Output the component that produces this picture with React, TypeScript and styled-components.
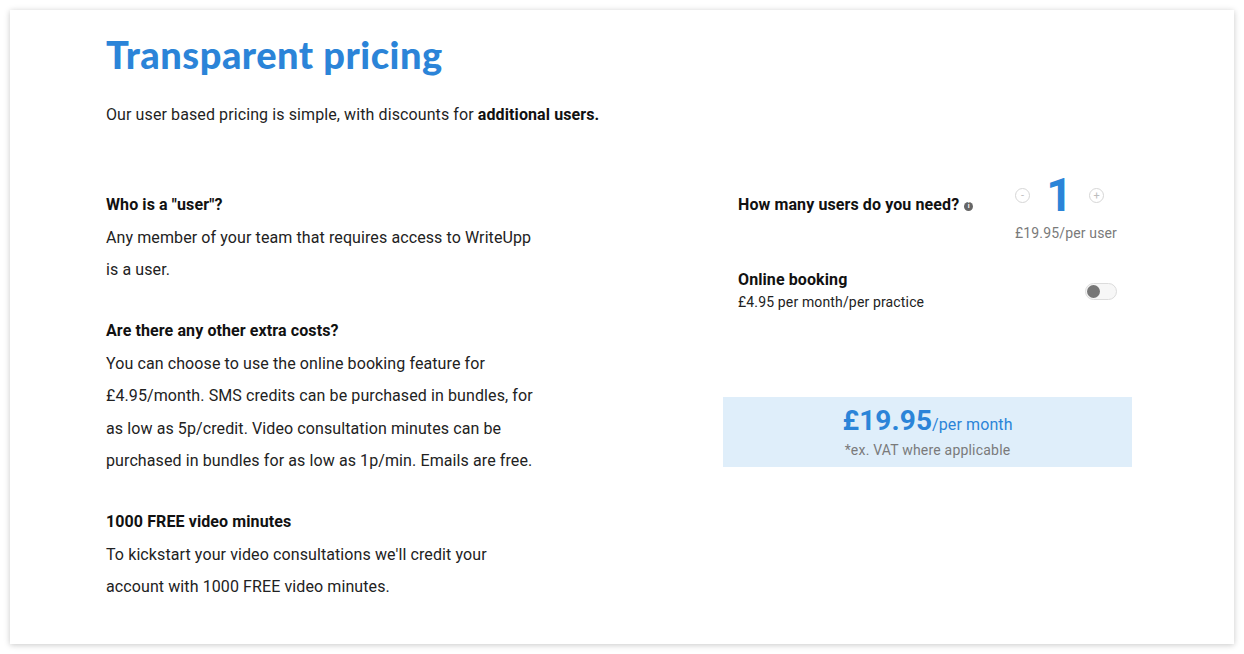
import React from "react";
import styled, { createGlobalStyle } from "styled-components";

const Global = createGlobalStyle`
  html, body { margin: 0; padding: 0; background: #ffffff; }
  body { font-family: Roboto, "Liberation Sans", Arial, sans-serif; color: #212121; letter-spacing: 0.1px; }
  * { box-sizing: border-box; }
`;

const Page = styled.div`
  padding: 10px;
  width: 1244px;
  height: 654px;
`;

const Card = styled.section`
  background: #fff;
  height: 634px;
  box-shadow: 0 1px 6px rgba(0, 0, 0, 0.22);
  padding: 21px 102px 0 96px;
`;

const Title = styled.h1`
  margin: 0;
  font-family: Lato, "Open Sans", sans-serif;
  font-weight: 900;
  font-size: 38px;
  line-height: 46px;
  color: #2b84d8;
  letter-spacing: 0.5px;
`;

const Lead = styled.p`
  margin: 26px 0 0;
  font-size: 16px;
  line-height: 24px;
  color: #1f1f1f;
  b { font-weight: 700; color: #111; }
`;

const Columns = styled.div`
  margin-top: 46px;
  display: flex;
  justify-content: space-between;
  align-items: flex-start;
`;

const Left = styled.div`
  width: 440px;
  padding-top: 16px;
  display: flex;
  flex-direction: column;
  gap: 28.5px;
`;

const Faq = styled.div`
  font-size: 16px;
  line-height: 32.5px;
  color: #222;
`;

const FaqTitle = styled.div`
  font-weight: 700;
  color: #111;
`;

const Right = styled.div`
  width: 409px;
  display: flex;
  flex-direction: column;
`;

const Row = styled.div<{ $top?: number }>`
  display: flex;
  justify-content: space-between;
  align-items: flex-start;
  padding: 0 15px;
  margin-top: ${(p) => p.$top ?? 0}px;
`;

const Question = styled.div`
  padding-top: 20px;
  font-size: 16px;
  line-height: 24px;
  font-weight: 700;
  color: #111;
  display: flex;
  align-items: center;
  gap: 5px;
`;

const Info = styled.span`
  width: 9px;
  height: 9px;
  border-radius: 50%;
  background: #666;
  color: #fff;
  font-size: 7px;
  line-height: 9px;
  text-align: center;
  font-weight: 700;
  margin-top: 2px;
  letter-spacing: 0;
`;

const Counter = styled.div`
  display: flex;
  flex-direction: column;
  align-items: flex-end;
`;

const Stepper = styled.div`
  display: flex;
  align-items: center;
  margin-right: 13px;
`;

const StepBtn = styled.button`
  width: 15px;
  height: 15px;
  border-radius: 50%;
  border: 1px solid #d6d6d6;
  background: #fff;
  color: #bdbdbd;
  font-size: 11px;
  line-height: 12px;
  padding: 0;
  font-family: Roboto, sans-serif;
  display: flex;
  align-items: center;
  justify-content: center;
  margin-top: 1px;
`;

const Count = styled.div`
  width: 59px;
  text-align: center;
  font-size: 46px;
  line-height: 44px;
  font-weight: 700;
  color: #2b84d8;
`;

const PerUser = styled.div`
  margin-top: 6px;
  font-size: 14px;
  line-height: 20px;
  color: #7a7a7a;
  letter-spacing: 0.15px;
`;

const Booking = styled.div`
  display: flex;
  flex-direction: column;
`;

const BookingName = styled.div`
  font-size: 16px;
  line-height: 22px;
  font-weight: 700;
  color: #111;
`;

const BookingPrice = styled.div`
  margin-top: 1px;
  font-size: 14px;
  line-height: 20px;
  color: #222;
  letter-spacing: 0.15px;
`;

const Toggle = styled.div`
  margin-top: 14px;
  width: 32px;
  height: 17px;
  border-radius: 9px;
  border: 1px solid #dcdcdc;
  background: #f7f7f7;
  padding: 1px;
  display: flex;
`;

const Knob = styled.div`
  width: 13px;
  height: 13px;
  border-radius: 50%;
  background: #777;
`;

const Total = styled.div`
  margin-top: 85px;
  height: 70px;
  background: #dfeefa;
  display: flex;
  flex-direction: column;
  align-items: center;
  padding-top: 7px;
`;

const TotalLine = styled.div`
  color: #2b84d8;
  font-size: 16px;
  line-height: 34px;
  strong { font-size: 28px; font-weight: 700; }
`;

const Vat = styled.div`
  margin-top: -2px;
  font-size: 14px;
  line-height: 20px;
  color: #7a7a7a;
  letter-spacing: 0.2px;
`;

export default function App() {
  return (
    <>
      <Global />
      <Page>
        <Card>
          <Title>Transparent pricing</Title>
          <Lead>
            Our user based pricing is simple, with discounts for <b>additional users.</b>
          </Lead>
          <Columns>
            <Left>
              <Faq>
                <FaqTitle>Who is a "user"?</FaqTitle>
                Any member of your team that requires access to WriteUpp
                <br />
                is a user.
              </Faq>
              <Faq>
                <FaqTitle>Are there any other extra costs?</FaqTitle>
                You can choose to use the online booking feature for
                <br />
                £4.95/month. SMS credits can be purchased in bundles, for
                <br />
                as low as 5p/credit. Video consultation minutes can be
                <br />
                purchased in bundles for as low as 1p/min. Emails are free.
              </Faq>
              <Faq>
                <FaqTitle>1000 FREE video minutes</FaqTitle>
                To kickstart your video consultations we'll credit your
                <br />
                account with 1000 FREE video minutes.
              </Faq>
            </Left>
            <Right>
              <Row>
                <Question>
                  How many users do you need?
                  <Info>i</Info>
                </Question>
                <Counter>
                  <Stepper>
                    <StepBtn>-</StepBtn>
                    <Count>1</Count>
                    <StepBtn>+</StepBtn>
                  </Stepper>
                  <PerUser>£19.95/per user</PerUser>
                </Counter>
              </Row>
              <Row $top={26}>
                <Booking>
                  <BookingName>Online booking</BookingName>
                  <BookingPrice>£4.95 per month/per practice</BookingPrice>
                </Booking>
                <Toggle>
                  <Knob />
                </Toggle>
              </Row>
              <Total>
                <TotalLine>
                  <strong>£19.95</strong>/per month
                </TotalLine>
                <Vat>*ex. VAT where applicable</Vat>
              </Total>
            </Right>
          </Columns>
        </Card>
      </Page>
    </>
  );
}
